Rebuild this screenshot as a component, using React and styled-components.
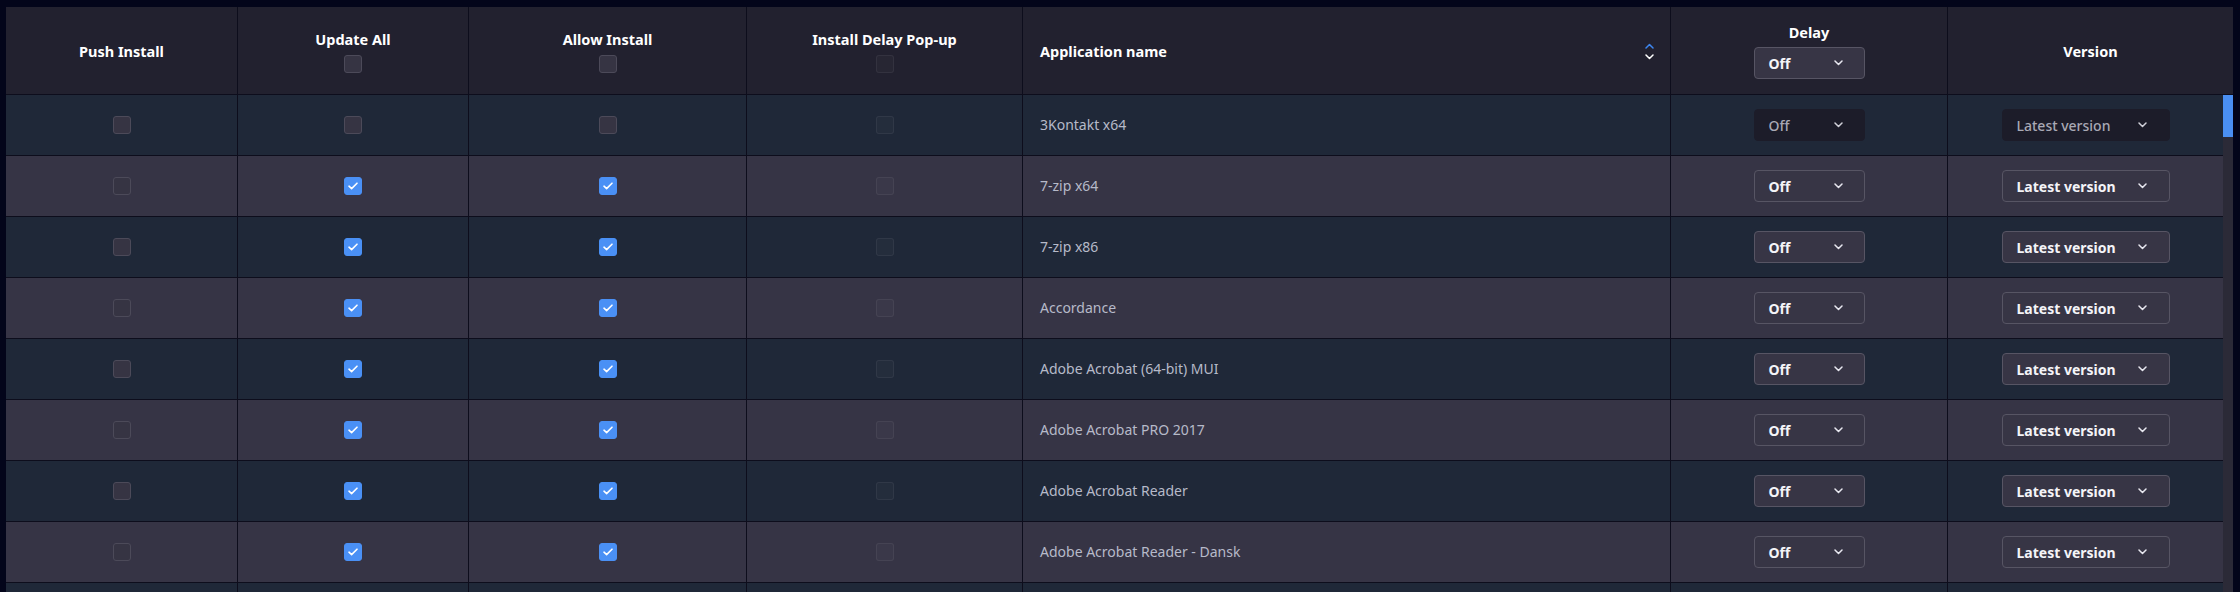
import React from "react";
import styled, { createGlobalStyle } from "styled-components";

const Global = createGlobalStyle`
  html, body { margin: 0; padding: 0; height: 592px; overflow: hidden; background: #03051a; }
  body { font-family: "Noto Sans", "Open Sans", sans-serif; -webkit-font-smoothing: antialiased; }
  * { box-sizing: border-box; }
`;

const COLS = [232, 231, 278, 276, 648, 277, 275];

const Page = styled.div`
  padding: 7px 7px 0 6px;
  height: 592px;
  background: #03051a;
`;

const Table = styled.div`
  display: flex;
  flex-direction: column;
  height: 100%;
  overflow: hidden;
`;

const HeaderRow = styled.div`
  display: grid;
  grid-template-columns: ${COLS.slice(0, 6).map((c) => c + "px").join(" ")} 1fr;
  height: 88px;
  background: #22212f;
  border-bottom: 1px solid #0d0d1c;
`;

const HeadCell = styled.div`
  display: flex;
  flex-direction: ${(p) => (p.$row ? "row" : "column")};
  align-items: center;
  justify-content: ${(p) => (p.$row ? "space-between" : "center")};
  gap: ${(p) => (p.$gap ? p.$gap : 0)}px;
  padding: ${(p) => (p.$row ? "0 16px 0 17px" : "0")};
  border-right: ${(p) => (p.$last ? "none" : "1px solid #0d0d1c")};
`;

const HeadTitle = styled.span`
  color: #ffffff;
  font-weight: 700;
  font-size: 14.5px;
  line-height: 20px;
  white-space: nowrap;
`;

const SortIcon = styled.span`
  display: flex;
  flex-direction: column;
  gap: 5px;
  margin-top: 1px;
`;

const Body = styled.div`
  display: flex;
  flex: 1;
  min-height: 0;
`;

const Rows = styled.div`
  flex: 1;
  display: flex;
  flex-direction: column;
  overflow: hidden;
`;

const Row = styled.div`
  display: grid;
  grid-template-columns: ${COLS.map((c) => c + "px").join(" ")};
  flex: 0 0 61px;
  height: 61px;
  background: ${(p) => (p.$alt ? "#363445" : "#1f2838")};
  border-bottom: 1px solid #0d0d1c;
`;

const Cell = styled.div`
  display: flex;
  align-items: center;
  justify-content: ${(p) => (p.$left ? "flex-start" : "center")};
  padding-left: ${(p) => (p.$left ? "17px" : "0")};
  border-right: ${(p) => (p.$last ? "none" : "1px solid #0d0d1c")};
`;

const AppName = styled.span`
  color: #b6bac9;
  font-size: 14px;
  line-height: 20px;
`;

const Box = styled.span`
  width: 18px;
  height: 18px;
  border-radius: 3px;
  display: inline-flex;
  align-items: center;
  justify-content: center;
  background: ${(p) =>
    p.$checked ? "#4a90f5" : p.$disabled ? "rgba(255,255,255,0.025)" : "#363443"};
  border: 1px solid
    ${(p) =>
      p.$checked ? "#4a90f5" : p.$disabled ? "rgba(255,255,255,0.06)" : "#4c4a59"};
`;

const Select = styled.div`
  width: ${(p) => p.$w}px;
  height: 32px;
  display: flex;
  align-items: center;
  justify-content: space-between;
  padding: 0 ${(p) => p.$pr}px 0 14px;
  border-radius: 4px;
  background: ${(p) => (p.$muted ? "#1c1c29" : "#373545")};
  border: 1px solid ${(p) => (p.$muted ? "#1c1c29" : "#575564")};
  color: ${(p) => (p.$muted ? "#a9a9b5" : "#f4f4f8")};
  font-size: 14px;
  font-weight: ${(p) => (p.$muted ? 500 : 700)};
  white-space: nowrap;
`;

const Track = styled.div`
  width: 10px;
  background: #2b2a37;
  display: flex;
  flex-direction: column;
`;

const Thumb = styled.div`
  height: 42px;
  background: #4a8ff2;
`;

const ChevronDown = ({ color = "#e8e8f0" }) => (
  <svg width="9" height="6" viewBox="0 0 9 6" fill="none">
    <path d="M1 1l3.5 3.5L8 1" stroke={color} strokeWidth="1.5" strokeLinecap="round" strokeLinejoin="round" />
  </svg>
);

const ChevronUp = ({ color }) => (
  <svg width="9" height="6" viewBox="0 0 9 6" fill="none">
    <path d="M1 5l3.5-3.5L8 5" stroke={color} strokeWidth="1.5" strokeLinecap="round" strokeLinejoin="round" />
  </svg>
);

const Checkbox = ({ checked, disabled }) => (
  <Box $checked={checked} $disabled={disabled}>
    {checked && (
      <svg width="12" height="10" viewBox="0 0 12 10" fill="none">
        <path d="M2 5.2l2.6 2.4L10 2.2" stroke="#fff" strokeWidth="1.6" strokeLinecap="round" strokeLinejoin="round" />
      </svg>
    )}
  </Box>
);

const DropDown = ({ label, w, pr, muted }) => (
  <Select $w={w} $pr={pr} $muted={muted}>
    <span>{label}</span>
    <ChevronDown color={muted ? "#d0d0d8" : "#e8e8f0"} />
  </Select>
);

const apps = [
  { name: "3Kontakt x64", on: false, muted: true },
  { name: "7-zip x64", on: true },
  { name: "7-zip x86", on: true },
  { name: "Accordance", on: true },
  { name: "Adobe Acrobat (64-bit) MUI", on: true },
  { name: "Adobe Acrobat PRO 2017", on: true },
  { name: "Adobe Acrobat Reader", on: true },
  { name: "Adobe Acrobat Reader - Dansk", on: true },
];

export default function App() {
  return (
    <Page>
      <Global />
      <Table>
        <HeaderRow>
          <HeadCell>
            <HeadTitle>Push Install</HeadTitle>
          </HeadCell>
          <HeadCell $gap={6}>
            <HeadTitle>Update All</HeadTitle>
            <Checkbox />
          </HeadCell>
          <HeadCell $gap={6}>
            <HeadTitle>Allow Install</HeadTitle>
            <Checkbox />
          </HeadCell>
          <HeadCell $gap={6}>
            <HeadTitle>Install Delay Pop-up</HeadTitle>
            <Checkbox disabled />
          </HeadCell>
          <HeadCell $row>
            <HeadTitle>Application name</HeadTitle>
            <SortIcon>
              <ChevronUp color="#3d86f0" />
              <ChevronDown color="#ffffff" />
            </SortIcon>
          </HeadCell>
          <HeadCell $gap={5}>
            <HeadTitle>Delay</HeadTitle>
            <DropDown label="Off" w={111} pr={21} />
          </HeadCell>
          <HeadCell $last>
            <HeadTitle>Version</HeadTitle>
          </HeadCell>
        </HeaderRow>
        <Body>
          <Rows>
            {apps.map((a, i) => (
              <Row key={a.name} $alt={i % 2 === 1}>
                <Cell>
                  <Checkbox />
                </Cell>
                <Cell>
                  <Checkbox checked={a.on} />
                </Cell>
                <Cell>
                  <Checkbox checked={a.on} />
                </Cell>
                <Cell>
                  <Checkbox disabled />
                </Cell>
                <Cell $left>
                  <AppName>{a.name}</AppName>
                </Cell>
                <Cell>
                  <DropDown label="Off" w={111} pr={21} muted={a.muted} />
                </Cell>
                <Cell $last>
                  <DropDown label="Latest version" w={168} pr={22} muted={a.muted} />
                </Cell>
              </Row>
            ))}
            <Row>
              {COLS.map((c, i) => (
                <Cell key={i} $last={i === COLS.length - 1} />
              ))}
            </Row>
          </Rows>
          <Track>
            <Thumb />
          </Track>
        </Body>
      </Table>
    </Page>
  );
}
